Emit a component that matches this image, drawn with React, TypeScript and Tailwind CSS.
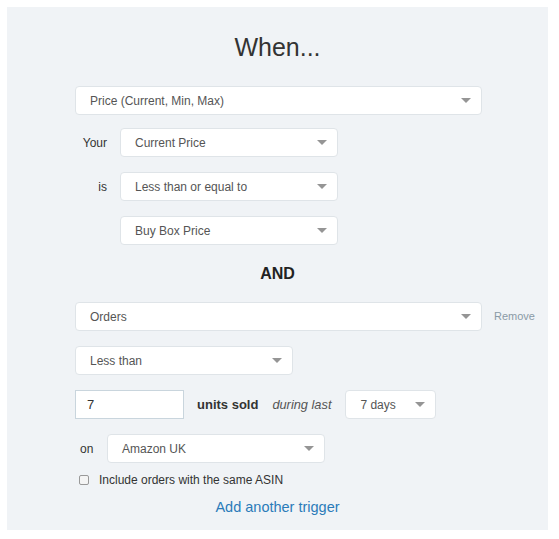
import React from 'react';

const font = { fontFamily: '"Liberation Sans", Arial, sans-serif' };

const Caret = () => (
  <svg width="10" height="5" viewBox="0 0 10 5" className="shrink-0">
    <path d="M0 0 H10 L5 5 Z" fill="#959595" />
  </svg>
);

const Select = ({ label, className }: { label: string; className: string }) => (
  <div
    className={`flex h-[29px] items-center justify-between rounded-[4px] border border-[#dfe4e8] bg-white pl-[14px] pr-[10px] text-[12px] text-[#555] ${className}`}
  >
    <span>{label}</span>
    <Caret />
  </div>
);

export default function App() {
  return (
    <div className="min-h-[539px] bg-white pl-[7px] pt-[7px]" style={font}>
      <div className="flex h-[523px] w-[541px] flex-col bg-[#f0f3f6] pl-[68px]">
        <h1 className="-ml-[68px] mt-[25px] text-center text-[25px] leading-[30px] font-normal text-[#333]">When...</h1>

        <Select label="Price (Current, Min, Max)" className="mt-[24px] w-[407px]" />

        <div className="mt-[13px] flex items-center">
          <span className="w-[45px] pr-[13px] text-right text-[12px] text-[#333]">Your</span>
          <Select label="Current Price" className="w-[218px]" />
        </div>
        <div className="mt-[15px] flex items-center">
          <span className="w-[45px] pr-[13px] text-right text-[12px] text-[#333]">is</span>
          <Select label="Less than or equal to" className="w-[218px]" />
        </div>
        <div className="mt-[15px] flex items-center">
          <span className="w-[45px]" />
          <Select label="Buy Box Price" className="w-[218px]" />
        </div>

        <div className="-ml-[68px] mt-[19px] text-center text-[16px] leading-[20px] font-bold text-[#222]">AND</div>

        <div className="mt-[18px] flex items-center">
          <Select label="Orders" className="w-[407px]" />
          <a className="ml-[12px] text-[11px] text-[#8a9aa6]">Remove</a>
        </div>

        <Select label="Less than" className="mt-[15px] w-[218px]" />

        <div className="mt-[15px] flex items-center">
          <div className="flex h-[29px] w-[109px] items-center border border-[#c9d5dd] bg-white pl-[11px] text-[13px] text-[#333]">7</div>
          <span className="ml-[13px] text-[13px] font-bold text-[#333]">units sold</span>
          <span className="ml-[14px] text-[12.8px] italic text-[#555]">during last</span>
          <Select label="7 days" className="ml-[14px] w-[91px]" />
        </div>

        <div className="mt-[15px] flex items-center">
          <span className="w-[32px] pl-[5px] text-[12px] text-[#333]">on</span>
          <Select label="Amazon UK" className="w-[218px]" />
        </div>

        <label className="mt-[8px] flex items-center pl-[4px] text-[12px] text-[#333]">
          <span className="h-[10px] w-[10px] rounded-[2px] border border-[#999] bg-[#f4f4f4]" />
          <span className="ml-[10px]">Include orders with the same ASIN</span>
        </label>

        <a className="-ml-[68px] mt-[8px] text-center text-[14.5px] text-[#2b7bb9]">Add another trigger</a>
      </div>
    </div>
  );
}
